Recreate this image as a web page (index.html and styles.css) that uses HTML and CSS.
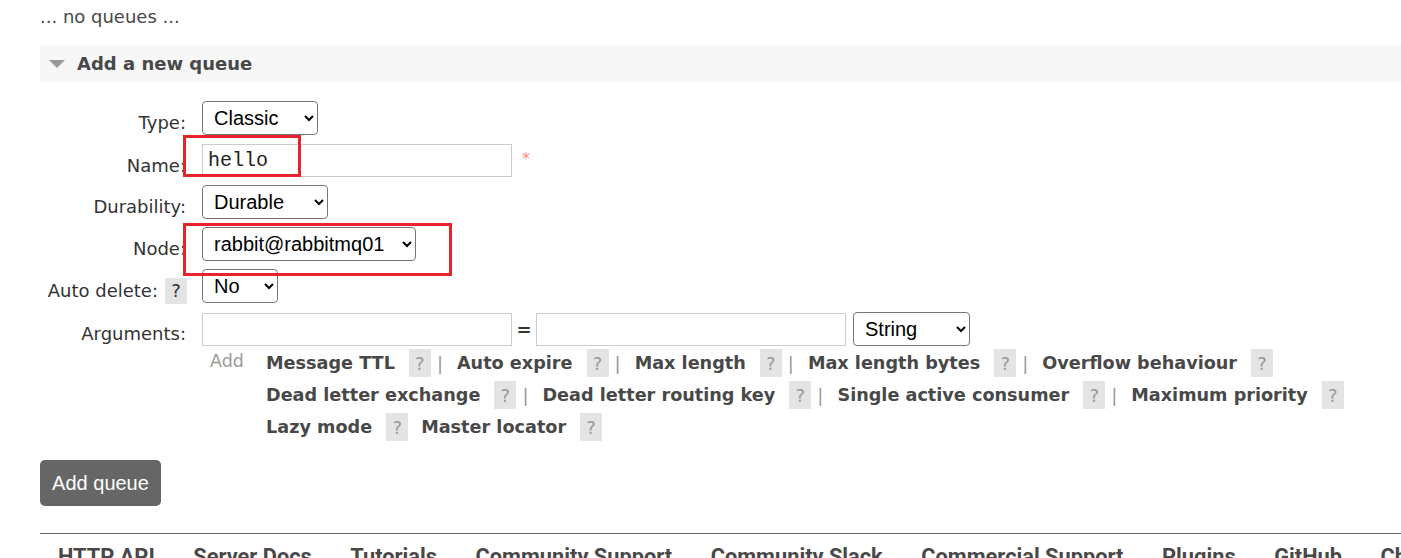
FILE: index.html
```html
<!DOCTYPE html>
<html>
<head>
<meta charset="utf-8">
<link rel="stylesheet" href="styles.css">
</head>
<body>
<p class="noq">... no queues ...</p>
<div class="section">
  <h2 class="sec-head"><span class="tri"></span>Add a new queue</h2>
  <form class="form">
    <label class="lbl">Type:</label>
    <div class="ctl"><select class="sel w-type"><option>Classic</option><option>Quorum</option></select></div>

    <label class="lbl">Name:</label>
    <div class="ctl"><input class="inp" type="text" value="hello"><span class="req">*</span></div>

    <label class="lbl">Durability:</label>
    <div class="ctl"><select class="sel w-dur"><option>Durable</option><option>Transient</option></select></div>

    <label class="lbl">Node:</label>
    <div class="ctl"><select class="sel w-node"><option>rabbit@rabbitmq01</option></select></div>

    <label class="lbl lbl-help">Auto delete:<span class="qbox">?</span></label>
    <div class="ctl"><select class="sel w-no"><option>No</option><option>Yes</option></select></div>

    <label class="lbl">Arguments:</label>
    <div class="ctl ctl-col">
      <div class="argrow">
        <input class="inp" type="text">
        <span class="eq">=</span>
        <input class="inp" type="text">
        <select class="sel w-str"><option>String</option><option>Number</option><option>Boolean</option><option>List</option></select>
      </div>
      <div class="helps">
        <span class="add">Add</span>
        <div class="lines">
          <div class="hline">
            <span class="hl">Message TTL</span><span class="hq">?</span><span class="sep">|</span>
            <span class="hl">Auto expire</span><span class="hq">?</span><span class="sep">|</span>
            <span class="hl">Max length</span><span class="hq">?</span><span class="sep">|</span>
            <span class="hl">Max length bytes</span><span class="hq">?</span><span class="sep">|</span>
            <span class="hl">Overflow behaviour</span><span class="hq">?</span>
          </div>
          <div class="hline">
            <span class="hl">Dead letter exchange</span><span class="hq">?</span><span class="sep">|</span>
            <span class="hl">Dead letter routing key</span><span class="hq">?</span><span class="sep">|</span>
            <span class="hl">Single active consumer</span><span class="hq">?</span><span class="sep">|</span>
            <span class="hl">Maximum priority</span><span class="hq">?</span>
          </div>
          <div class="hline">
            <span class="hl">Lazy mode</span><span class="hq">?</span>
            <span class="hl hl-gap">Master locator</span><span class="hq">?</span>
          </div>
        </div>
      </div>
    </div>
  </form>
  <button class="btn" type="button">Add queue</button>
</div>
<div class="footer">
  <a>HTTP API</a>
  <a>Server Docs</a>
  <a>Tutorials</a>
  <a>Community Support</a>
  <a>Community Slack</a>
  <a>Commercial Support</a>
  <a>Plugins</a>
  <a>GitHub</a>
  <a>Changelog</a>
</div>
<div class="mark mark-name"></div>
<div class="mark mark-node"></div>
</body>
</html>
```
FILE: styles.css
```css
html, body {
  margin: 0;
  padding: 0;
  background: #fff;
  overflow: hidden;
}
body {
  padding-left: 40px;
  font-family: "DejaVu Sans", Verdana, sans-serif;
  font-size: 18px;
  color: #484848;
  height: 558px;
  position: relative;
}
.noq {
  margin: 0;
  padding-top: 6px;
  line-height: 22px;
}
.section {
  margin-top: 17px;
}
.sec-head {
  margin: 0;
  height: 37px;
  background: #f7f7f7;
  display: flex;
  align-items: center;
  padding-left: 9px;
  font-size: 18px;
  font-weight: bold;
  color: #484848;
}
.tri {
  width: 0;
  height: 0;
  border-left: 8.5px solid transparent;
  border-right: 8.5px solid transparent;
  border-top: 8px solid #999;
  margin-right: 12px;
  margin-top: 1px;
}
.form {
  margin-top: 19px;
  display: grid;
  grid-template-columns: 146px auto;
  column-gap: 16px;
  row-gap: 8px;
  align-items: start;
}
.lbl {
  text-align: right;
  padding-top: 11px;
  line-height: 22px;
  color: #333;
  white-space: nowrap;
}
.lbl-help {
  display: flex;
  justify-content: flex-end;
  align-items: center;
  padding-top: 9px;
  margin-right: -1px;
}
.qbox {
  display: inline-flex;
  align-items: center;
  justify-content: center;
  width: 22px;
  height: 26px;
  background: #e4e4e4;
  margin-left: 7px;
  color: #333;
  font-size: 18px;
}
.ctl {
  display: flex;
  align-items: center;
}
.ctl-col {
  flex-direction: column;
  align-items: flex-start;
}
.sel {
  height: 34px;
  font-family: "Liberation Sans", Arial, sans-serif;
  font-size: 20px;
  color: #000;
  background: #fff;
  border: 1px solid #767676;
  border-radius: 4px;
  padding: 0 4px 0 7px;
  margin: 0;
}
.w-type { width: 116px; margin-bottom: 1px; }
.w-dur { width: 126px; }
.w-node { width: 214px; }
.w-no { width: 76px; }
.w-str { width: 117px; }
.inp {
  width: 310px;
  height: 33px;
  box-sizing: border-box;
  border: 1px solid #ccc;
  padding: 0 5px;
  margin: 0;
  font-family: "Liberation Mono", "Courier New", monospace;
  font-size: 20px;
  color: #222;
  outline: none;
}
.req {
  color: #f88;
  margin-left: 10px;
  font-size: 16px;
  margin-top: -4px;
}
.argrow {
  display: flex;
  align-items: center;
}
.eq {
  width: 24px;
  text-align: center;
  color: #333;
  font-weight: bold;
}
.argrow .sel {
  margin-left: 7px;
}
.helps {
  display: flex;
  margin-top: 1px;
}
.add {
  width: 56px;
  padding-left: 8px;
  color: #999;
  font-size: 17.5px;
  line-height: 22px;
  padding-top: 3px;
}
.lines {
  display: flex;
  flex-direction: column;
}
.hline {
  height: 32px;
  display: flex;
  align-items: center;
  white-space: nowrap;
}
.hl {
  font-weight: bold;
  font-size: 17.65px;
  color: #484848;
}
.hl-gap {
  margin-left: 13px;
}
.hq {
  display: inline-flex;
  align-items: center;
  justify-content: center;
  width: 22px;
  height: 28px;
  background: #e4e4e4;
  color: #999;
  margin-left: 14px;
  font-size: 18px;
}
.sep {
  color: #999;
  margin: 0 14px 0 6px;
  font-size: 18px;
}
.btn {
  display: block;
  margin-top: 17px;
  width: 121px;
  height: 46px;
  background: #666;
  color: #fff;
  border: none;
  border-radius: 5px;
  font-family: "Liberation Sans", Arial, sans-serif;
  font-size: 20px;
  padding: 0;
}
.footer {
  margin-top: 27px;
  border-top: 1px solid #666;
  padding: 10px 0 0 18px;
  display: flex;
  gap: 38.5px;
  white-space: nowrap;
  font-family: Roboto, "Liberation Sans", sans-serif;
  font-weight: bold;
  font-size: 21.8px;
  line-height: 26px;
  color: #484848;
}
.mark {
  position: absolute;
  border: 3px solid #e8232b;
  box-sizing: border-box;
}
.mark-name {
  left: 183px;
  top: 135px;
  width: 118px;
  height: 42px;
}
.mark-node {
  left: 183px;
  top: 223px;
  width: 269px;
  height: 53px;
}
```
